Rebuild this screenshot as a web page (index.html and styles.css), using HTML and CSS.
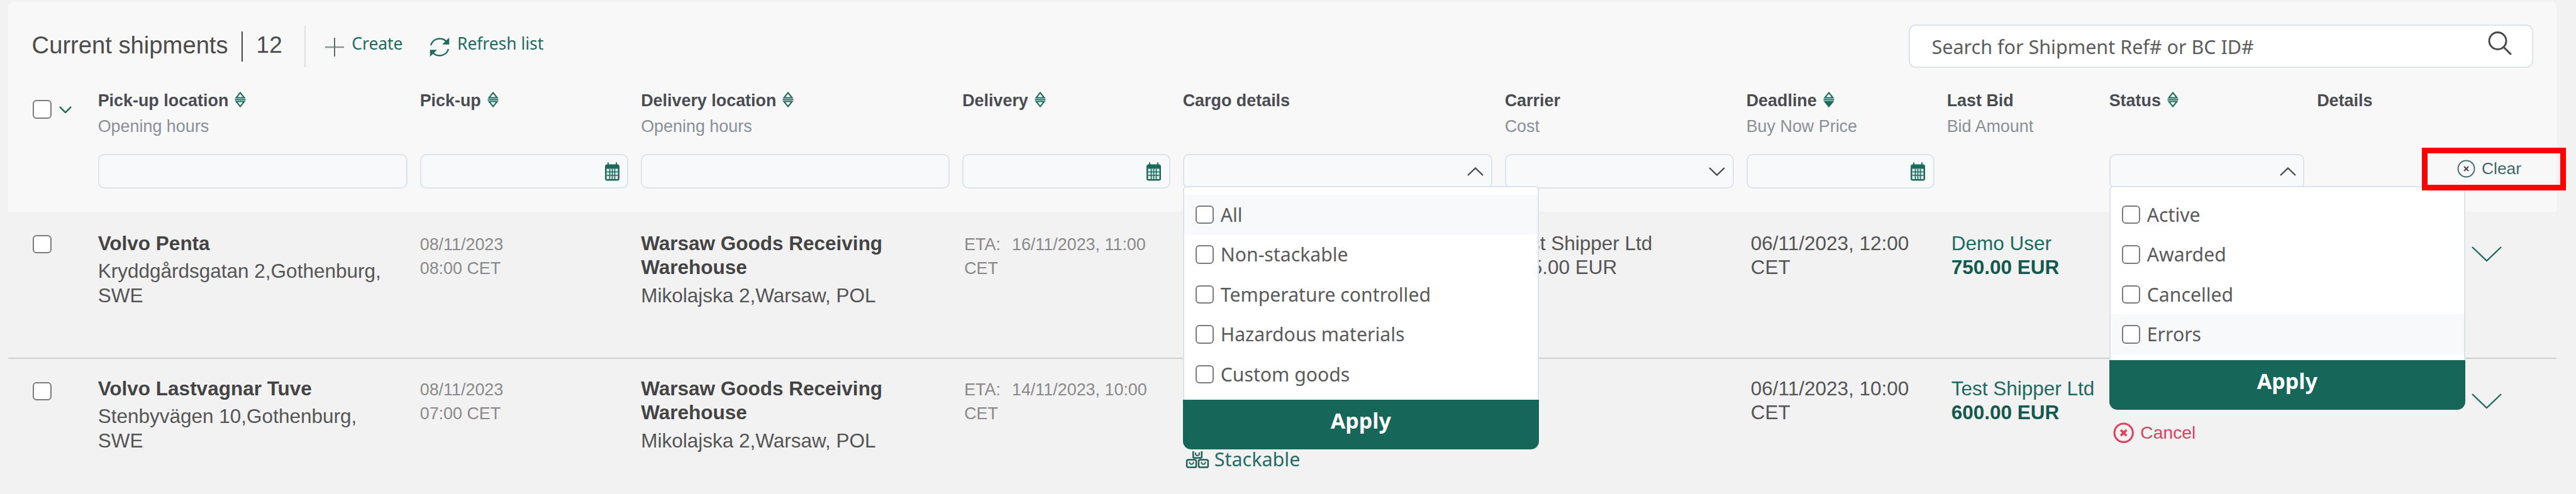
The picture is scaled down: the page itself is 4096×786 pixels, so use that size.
FILE: index.html
```html
<!DOCTYPE html>
<html lang="en">
<head>
<meta charset="utf-8">
<title>Current shipments</title>
<link rel="stylesheet" href="styles.css">
</head>
<body>
<main class="page">
  <section class="panel">
    <div class="toolbar">
      <h1 class="title">Current shipments</h1>
      <span class="bar"></span>
      <span class="count">12</span>
      <span class="rule"></span>
      <a class="action action-create">
        <svg class="ico-plus" viewBox="0 0 30 30"><path d="M0 15H30" stroke="#8a9492" stroke-width="2.4"/><path d="M15 0V30" stroke="#5b6f6c" stroke-width="2"/></svg>
        <span>Create</span>
      </a>
      <a class="action action-refresh">
        <svg class="ico-refresh" viewBox="0 0 34 32" fill="none" stroke="#1f6a60" stroke-width="2.3"><path d="M3 13C5 6 11 2.500 17 2.500C22 2.500 26 4.500 29 8.500"/><path d="M31 19C29 26 23 29.500 17 29.500C12 29.500 8 27.500 5 23.500"/><path d="M31.500 2.500V11H23Z" fill="#1f6a60" stroke-width="1.500"/><path d="M2.500 29.500V21H11Z" fill="#1f6a60" stroke-width="1.500"/></svg>
        <span>Refresh list</span>
      </a>
      <label class="search">
        <input class="search-input" type="text" placeholder="Search for Shipment Ref# or BC ID#">
        <svg class="ico-search" viewBox="0 0 39 37" fill="none" stroke="#4a4a4e" stroke-width="3"><circle cx="16.500" cy="15" r="13.500"/><path d="M26 25L37 36" stroke-linecap="round"/></svg>
      </label>
    </div>

    <div class="cols head">
      <div class="head-check">
        <span class="check"></span>
        <svg class="ico-head-chev" viewBox="0 0 21 12" fill="none" stroke="#1a6a5e" stroke-width="2.600"><path d="M1 1L10.500 10.500L20 1"/></svg>
      </div>
      <div class="th"><div class="th-label">Pick-up location<svg class="sort" viewBox="0 0 18 25" fill="none" stroke="#1a6a5e" stroke-width="2"><path d="M9 1.500L15.500 9.500H2.500Z"/><path d="M0.500 12.500H17.500"/><path d="M9 23.500L15.500 15.500H2.500Z"/></svg></div><div class="th-sub">Opening hours</div></div>
      <div class="th"><div class="th-label">Pick-up<svg class="sort" viewBox="0 0 18 25" fill="none" stroke="#1a6a5e" stroke-width="2"><path d="M9 1.500L15.500 9.500H2.500Z"/><path d="M0.500 12.500H17.500"/><path d="M9 23.500L15.500 15.500H2.500Z"/></svg></div></div>
      <div class="th"><div class="th-label">Delivery location<svg class="sort" viewBox="0 0 18 25" fill="none" stroke="#1a6a5e" stroke-width="2"><path d="M9 1.500L15.500 9.500H2.500Z"/><path d="M0.500 12.500H17.500"/><path d="M9 23.500L15.500 15.500H2.500Z"/></svg></div><div class="th-sub">Opening hours</div></div>
      <div class="th"><div class="th-label">Delivery<svg class="sort" viewBox="0 0 18 25" fill="none" stroke="#1a6a5e" stroke-width="2"><path d="M9 1.500L15.500 9.500H2.500Z"/><path d="M0.500 12.500H17.500"/><path d="M9 23.500L15.500 15.500H2.500Z"/></svg></div></div>
      <div class="th"><div class="th-label">Cargo details</div></div>
      <div class="th"><div class="th-label">Carrier</div><div class="th-sub">Cost</div></div>
      <div class="th"><div class="th-label">Deadline<svg class="sort" viewBox="0 0 18 25" fill="none" stroke="#1a6a5e" stroke-width="2"><path d="M9 1.500L15.500 9.500H2.500Z"/><path d="M0.500 12.500H17.500"/><path d="M9 23.500L15.500 15.500H2.500Z" fill="#1a6a5e"/></svg></div><div class="th-sub">Buy Now Price</div></div>
      <div class="th"><div class="th-label">Last Bid</div><div class="th-sub">Bid Amount</div></div>
      <div class="th"><div class="th-label">Status<svg class="sort" viewBox="0 0 18 25" fill="none" stroke="#1a6a5e" stroke-width="2"><path d="M9 1.500L15.500 9.500H2.500Z"/><path d="M0.500 12.500H17.500"/><path d="M9 23.500L15.500 15.500H2.500Z"/></svg></div></div>
      <div class="th"><div class="th-label">Details</div></div>
    </div>

    <div class="cols filters">
      <div></div>
      <div class="field"></div>
      <div class="field"><svg class="ico-cal" viewBox="0 0 25 30"><use href="#cal"/></svg></div>
      <div class="field"></div>
      <div class="field"><svg class="ico-cal" viewBox="0 0 25 30"><use href="#cal"/></svg></div>
      <div class="filter-open">
        <div class="field"><svg class="ico-caret" viewBox="0 0 26 14" fill="none" stroke="#4a4a4e" stroke-width="2.400"><path d="M1 13L13 1.500L25 13"/></svg></div>
        <div class="dd">
          <ul class="dd-list">
            <li class="dd-item dd-hover"><span class="check"></span>All</li>
            <li class="dd-item"><span class="check"></span>Non-stackable</li>
            <li class="dd-item"><span class="check"></span>Temperature controlled</li>
            <li class="dd-item"><span class="check"></span>Hazardous materials</li>
            <li class="dd-item"><span class="check"></span>Custom goods</li>
          </ul>
          <button class="dd-apply" type="button"><span>Apply</span></button>
        </div>
      </div>
      <div class="field"><svg class="ico-caret" viewBox="0 0 26 14" fill="none" stroke="#4a4a4e" stroke-width="2.400"><path d="M1 1L13 12.500L25 1"/></svg></div>
      <div class="field"><svg class="ico-cal" viewBox="0 0 25 30"><use href="#cal"/></svg></div>
      <div></div>
      <div class="filter-open">
        <div class="field"><svg class="ico-caret" viewBox="0 0 26 14" fill="none" stroke="#4a4a4e" stroke-width="2.400"><path d="M1 13L13 1.500L25 13"/></svg></div>
        <div class="dd">
          <ul class="dd-list">
            <li class="dd-item"><span class="check"></span>Active</li>
            <li class="dd-item"><span class="check"></span>Awarded</li>
            <li class="dd-item"><span class="check"></span>Cancelled</li>
            <li class="dd-item dd-hover"><span class="check"></span>Errors</li>
          </ul>
          <button class="dd-apply" type="button"><span>Apply</span></button>
        </div>
      </div>
      <div class="filter-clear">
        <a class="clear">
          <svg class="ico-clear" viewBox="0 0 29 29" fill="none" stroke="#4b6f74" stroke-width="2"><circle cx="14.500" cy="14.500" r="13"/><path d="M11 11L18 18M18 11L11 18" stroke="#444"/></svg>
          <span>Clear</span>
        </a>
      </div>
    </div>
  </section>

  <article class="cols row row-first">
    <span class="check row-check"></span>
    <div class="cell-loc"><div class="name">Volvo Penta</div><div class="addr">Kryddgårdsgatan 2,Gothenburg, SWE</div></div>
    <div class="date">08/11/2023<br>08:00 CET</div>
    <div class="cell-loc"><div class="name">Warsaw Goods Receiving Warehouse</div><div class="addr">Mikolajska 2,Warsaw, POL</div></div>
    <div class="date date-eta"><span class="eta">ETA:</span><span>16/11/2023, 11:00</span><br><span>CET</span></div>
    <div></div>
    <div class="text">Test Shipper Ltd<br>825.00 EUR</div>
    <div class="text">06/11/2023, 12:00 CET</div>
    <div class="bid">Demo User<br><strong>750.00 EUR</strong></div>
    <div></div>
    <svg class="ico-expand" viewBox="0 0 48 24" fill="none" stroke="#1f6a60" stroke-width="2.400"><path d="M1 1L24 23L47 1"/></svg>
  </article>

  <article class="cols row">
    <span class="check row-check"></span>
    <div class="cell-loc"><div class="name">Volvo Lastvagnar Tuve</div><div class="addr">Stenbyvägen 10,Gothenburg, SWE</div></div>
    <div class="date">08/11/2023<br>07:00 CET</div>
    <div class="cell-loc"><div class="name">Warsaw Goods Receiving Warehouse</div><div class="addr">Mikolajska 2,Warsaw, POL</div></div>
    <div class="date date-eta"><span class="eta">ETA:</span><span>14/11/2023, 10:00</span><br><span>CET</span></div>
    <div class="stack">
      <svg class="ico-stack" viewBox="0 0 38 30" fill="none" stroke="#1f5f58" stroke-width="2.600"><path d="M12 2V11.500Q12 13 13.500 13H24.500Q26 13 26 11.500V2"/><path d="M16 4V7Q16 9 19 9Q22 9 22 7V4" stroke-width="2"/><rect x="1.500" y="16" width="15.500" height="12.500" rx="2.500"/><rect x="21" y="16" width="15.500" height="12.500" rx="2.500"/><path d="M6 19.500Q6 23.500 9.250 23.500Q12.500 23.500 12.500 19.500" stroke-width="2"/><path d="M25.500 19.500Q25.500 23.500 28.750 23.500Q32 23.500 32 19.500" stroke-width="2"/></svg>
      <span>Stackable</span>
    </div>
    <div></div>
    <div class="text">06/11/2023, 10:00 CET</div>
    <div class="bid">Test Shipper Ltd<br><strong>600.00 EUR</strong></div>
    <a class="cancel">
      <svg class="ico-cancel" viewBox="0 0 33 33" fill="none" stroke="#e0405f" stroke-width="3"><circle cx="16.500" cy="16.500" r="14.500"/><path d="M12 12L21 21M21 12L12 21" stroke-width="3.600"/></svg>
      <span>Cancel</span>
    </a>
    <svg class="ico-expand" viewBox="0 0 48 24" fill="none" stroke="#1f6a60" stroke-width="2.400"><path d="M1 1L24 23L47 1"/></svg>
  </article>
</main>

<svg class="defs" width="0" height="0" aria-hidden="true">
  <symbol id="cal" viewBox="0 0 25 30">
    <path d="M6 0.500V6M19 0.500V6" stroke="#1a6a5e" stroke-width="2" fill="none"/>
    <rect x="1" y="3.500" width="23" height="26" rx="3.500" fill="#1a6a5e"/>
    <path d="M3.500 10.500H21.500V27H3.500Z" fill="#dfeae7"/>
    <path d="M3.500 15.500H21.500M3.500 21H21.500M8.500 10.500V27M12.500 10.500V27M16.500 10.500V27" stroke="#1a6a5e" stroke-width="1.600" fill="none"/>
  </symbol>
</svg>
</body>
</html>
```

FILE: styles.css
```css
* { box-sizing: border-box; }
html, body { margin: 0; padding: 0; }
body {
  width: 4096px;
  height: 786px;
  overflow: hidden;
  background: #f2f2f2;
  font-family: "Liberation Sans", Arial, sans-serif;
  color: #555;
}
.defs { position: absolute; }
.page { padding: 3px 31.500px 0 13.400px; }
.panel {
  position: relative;
  z-index: 2;
  height: 334px;
  padding-top: 36.200px;
  background: #f8f8f8;
  border-top-left-radius: 8px;
  border-top-right-radius: 8px;
}
.toolbar {
  display: flex;
  align-items: center;
  height: 69px;
  padding: 0 36.500px 0 37.200px;
}
.title {
  margin: 0 21px 3px 0;
  font-size: 38.200px;
  line-height: 44px;
  font-weight: 400;
  color: #4c4c4c;
}
.bar { width: 2px; height: 48px; background: #444; margin-right: 22px; }
.count { font-size: 37px; line-height: 44px; color: #4c4c4c; margin: 0 35px 3px 0; }
.rule { width: 2px; height: 66px; background: #e0e0e0; margin-right: 31.600px; }
.action {
  display: flex;
  align-items: center;
  font-family: "Noto Sans", sans-serif;
  font-size: 26.400px;
  color: #1f6a60;
}
.action span { margin-bottom: 9px; }
.action-create { margin-right: 42px; }
.ico-plus { width: 30px; height: 30px; margin: 3px 12px 0 0; }
.ico-refresh { width: 34px; height: 32px; margin: 2px 10.500px 0 0; }
.search {
  display: flex;
  align-items: center;
  width: 993.500px;
  height: 69px;
  margin-left: auto;
  padding: 0 32px 0 35px;
  background: #fff;
  border: 2px solid #dbe4ec;
  border-radius: 11px;
}
.search-input {
  flex: 1;
  min-width: 0;
  height: 100%;
  padding: 0;
  border: 0;
  outline: 0;
  background: transparent;
  font-family: "Noto Sans", sans-serif;
  font-size: 30.500px;
}
.search-input::placeholder { color: #5c5c5c; opacity: 1; }
.ico-search { width: 39px; height: 37px; margin-top: -10px; }

.cols {
  display: grid;
  grid-template-columns: 83.200px 492px 331.500px 491px 330.500px 492px 364px 299px 238px 310.500px 1fr;
  column-gap: 20px;
  padding-left: 39.100px;
}
.head { margin-top: 32px; height: 82px; }
.head-check { display: flex; align-items: flex-start; gap: 11.500px; padding-top: 19.300px; }
.check {
  display: inline-block;
  flex: none;
  width: 29.600px;
  height: 29.600px;
  background: #fff;
  border: 2.600px solid #7b7b7b;
  border-radius: 6px;
}
.ico-head-chev { width: 20px; height: 11.500px; margin-top: 9.500px; }
.th-label, .th-sub { font-size: 26.900px; line-height: 41px; white-space: nowrap; }
.th-label { font-weight: 700; color: #4a4c52; }
.th-sub { color: #8b8f96; }
.sort { width: 18px; height: 25px; margin-left: 10px; vertical-align: -1.500px; }

.filters { margin-top: 23.300px; }
.field {
  display: flex;
  align-items: center;
  justify-content: flex-end;
  height: 54.500px;
  padding-right: 11.500px;
  background: #f8f9fb;
  border: 2px solid #dbe4ec;
  border-radius: 10px;
}
.ico-cal { width: 25px; height: 30px; }
.ico-caret { width: 26px; height: 14px; }
.filter-open { position: relative; }
.dd { position: absolute; top: 50.600px; left: 0; width: 566.400px; z-index: 3; }
.dd-list {
  margin: 0;
  padding: 11.500px 0 9px;
  list-style: none;
  background: #fff;
  border: solid #dbe4ec;
  border-width: 2px 2px 0;
  border-radius: 6px 6px 0 0;
}
.dd-item {
  display: flex;
  align-items: center;
  gap: 10.500px;
  height: 63.500px;
  padding-left: 18px;
  font-family: "Noto Sans", sans-serif;
  font-size: 30.200px;
  color: #5a5a5a;
}
.dd-hover { background: #f8f9fb; }
.dd-apply {
  display: block;
  width: 100%;
  height: 79px;
  padding: 0 0 13px;
  border: 0;
  border-radius: 0 0 13px 13px;
  background: #166659;
  color: #fff;
  font-family: "Noto Sans", sans-serif;
  font-size: 34px;
  font-weight: 700;
}
.filter-clear { position: relative; }
.clear {
  position: absolute;
  z-index: 4;
  top: -10.500px;
  left: 167.300px;
  display: flex;
  align-items: center;
  gap: 9.500px;
  width: 228.300px;
  height: 67.800px;
  padding-left: 47px;
  border: 9.600px solid #f00;
  font-size: 26.400px;
  color: #3f6a69;
}
.ico-clear { width: 29px; height: 29px; }

.row {
  --pad: 27.500px;
  align-items: first baseline;
  padding-top: var(--pad);
}
.row-first {
  --pad: 30.500px;
  height: 234px;
  border-bottom: 2.500px solid #cfcfcf;
}
.row-check { align-self: start; margin-top: calc(36.500px - var(--pad)); }
.cell-loc { padding-right: 12px; }
.name { font-size: 31.500px; line-height: 38.200px; font-weight: 700; color: #444; margin-bottom: 6.700px; }
.addr, .text { font-size: 31.500px; line-height: 38.200px; color: #555; }
.date { font-size: 26.900px; line-height: 38.800px; color: #8a8a8a; }
.date-eta { padding-left: 3px; }
.eta { margin-right: 18px; }
.text { padding-left: 7px; }
.bid { padding-left: 7px; font-size: 31.500px; line-height: 38.200px; color: #1f6a60; white-space: nowrap; }
.bid strong { color: #14594e; }
.stack {
  align-self: start;
  display: flex;
  align-items: center;
  gap: 8px;
  margin-top: calc(144.400px - var(--pad));
  padding-left: 4px;
  font-family: "Noto Sans", sans-serif;
  font-size: 30.500px;
  line-height: 30px;
  color: #256c67;
}
.ico-stack { width: 38px; height: 29px; }
.cancel {
  align-self: start;
  display: flex;
  align-items: center;
  gap: 9.500px;
  margin: calc(100.500px - var(--pad)) 0 0 6.700px;
  font-size: 28.300px;
  color: #e0405f;
}
.ico-cancel { width: 33.400px; height: 33.400px; }
.ico-expand {
  align-self: start;
  width: 48px;
  height: 24px;
  margin: calc(54.600px - var(--pad)) 0 0 245.500px;
}
```
